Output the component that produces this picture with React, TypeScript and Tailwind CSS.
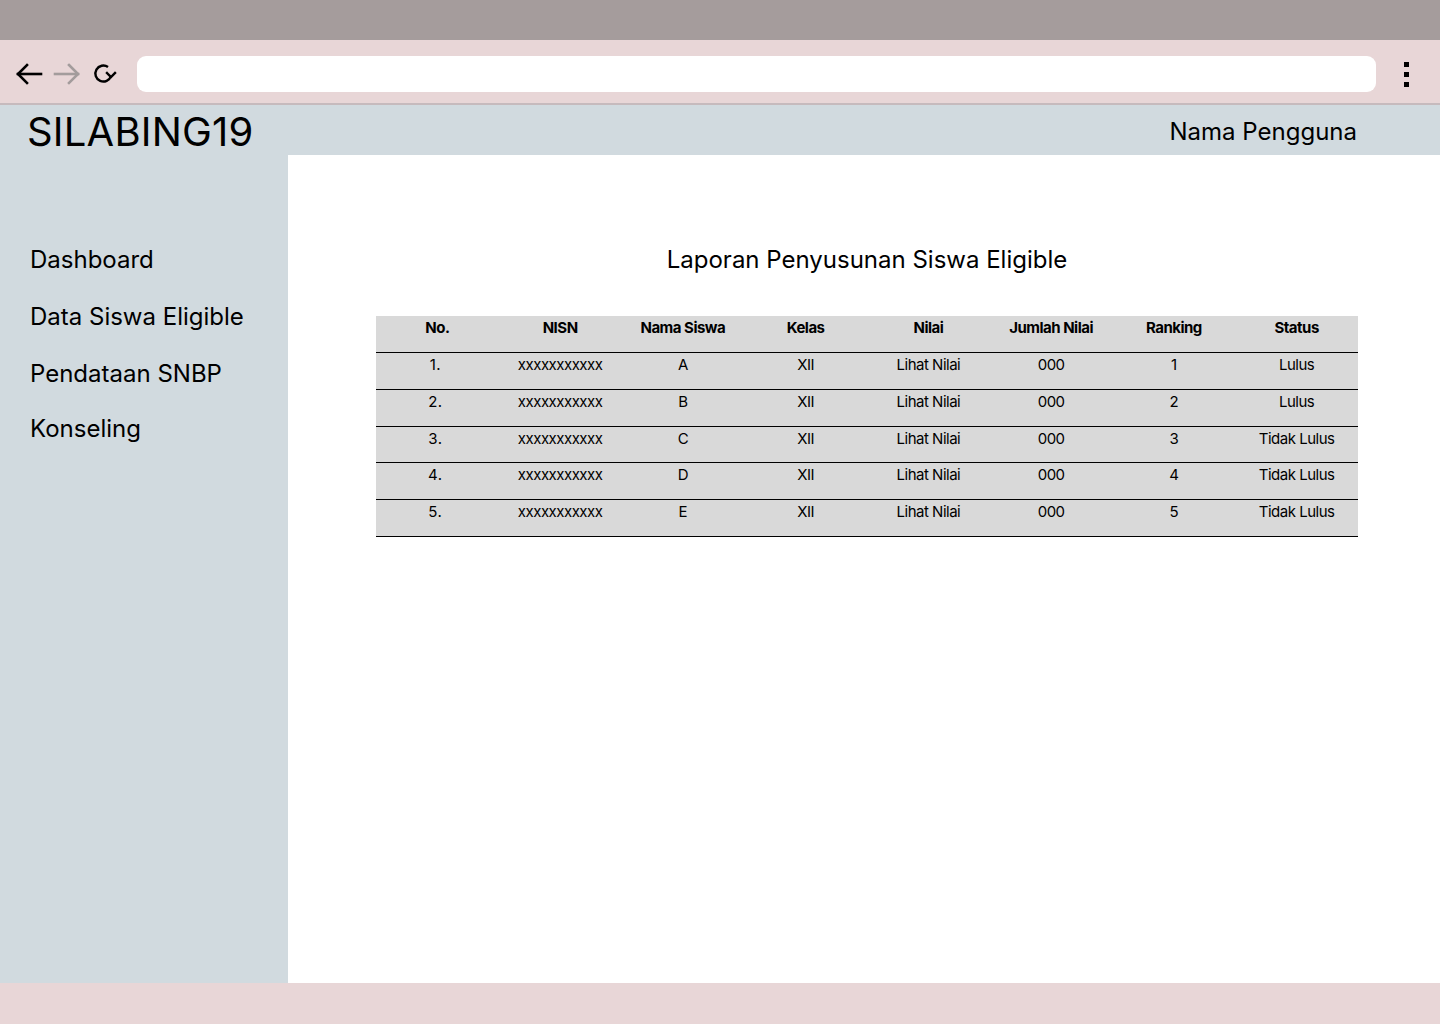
const NAV = ["Dashboard", "Data Siswa Eligible", "Pendataan SNBP", "Konseling"];

const COLUMNS = ["No.", "NISN", "Nama Siswa", "Kelas", "Nilai", "Jumlah Nilai", "Ranking", "Status"];

const ROWS = [
  ["1.", "xxxxxxxxxxx", "A", "XII", "Lihat Nilai", "000", "1", "Lulus"],
  ["2.", "xxxxxxxxxxx", "B", "XII", "Lihat Nilai", "000", "2", "Lulus"],
  ["3.", "xxxxxxxxxxx", "C", "XII", "Lihat Nilai", "000", "3", "Tidak Lulus"],
  ["4.", "xxxxxxxxxxx", "D", "XII", "Lihat Nilai", "000", "4", "Tidak Lulus"],
  ["5.", "xxxxxxxxxxx", "E", "XII", "Lihat Nilai", "000", "5", "Tidak Lulus"],
];

function BrowserBar() {
  return (
    <div className="h-[65px] bg-[#e8d6d7] flex items-start pt-[16px] border-b-2 border-[#c6babd]">
      <div className="flex items-center gap-[10px] pl-[15px] w-[137px] h-[36px]">
        {/* back */}
        <svg width="28" height="24" viewBox="0 0 28 24" fill="none" stroke="#000" strokeWidth="2.6" strokeLinecap="square">
          <path d="M3 12h23" />
          <path d="M12 3l-9 9 9 9" />
        </svg>
        {/* forward */}
        <svg width="28" height="24" viewBox="0 0 28 24" fill="none" stroke="#a39c9c" strokeWidth="2.6" strokeLinecap="square">
          <path d="M2 12h23" />
          <path d="M16 3l9 9-9 9" />
        </svg>
        {/* reload */}
        <svg width="26" height="24" viewBox="0 0 26 24" fill="none" stroke="#000" strokeWidth="2.4" className="ml-[1px]">
          <path d="M19 14a8 8 0 1 1-3-9" />
          <path d="M15 11l4 4 4-4" strokeLinecap="square" />
        </svg>
      </div>
      <div className="w-[1239px] h-[36px] bg-white rounded-[9px]" />
      <div className="flex-1 h-[36px] flex flex-col items-center justify-center gap-[5px] pr-[4px]">
        <div className="w-[5px] h-[5px] bg-black" />
        <div className="w-[5px] h-[5px] bg-black" />
        <div className="w-[5px] h-[5px] bg-black" />
      </div>
    </div>
  );
}

export default function App() {
  return (
    <div className="w-[1440px] h-[1024px] flex flex-col overflow-hidden text-black" style={{ fontFamily: "Inter, 'Noto Sans', sans-serif" }}>
      <div className="h-[40px] bg-[#a59c9c]" />
      <BrowserBar />

      <div className="h-[878px] flex">
        <aside className="w-[288px] bg-[#d1dadf] flex flex-col">
          <div className="pl-[27px] pt-[2px] text-[40px] leading-[50px] tracking-[0.2px]">SILABING19</div>
          <nav className="flex flex-col pl-[30px] pt-[87px] gap-[25px] text-[24px] leading-[32px]">
            {NAV.map((n, i) => (
              <div key={n} className={i === 3 ? "-mt-[2px]" : ""}>{n}</div>
            ))}
          </nav>
        </aside>

        <main className="flex-1 flex flex-col bg-white">
          <header className="h-[50px] bg-[#d1dadf] flex items-center justify-end pt-[4px] pr-[83px] text-[24px] leading-[32px]">
            Nama Pengguna
          </header>
          <div className="ml-[88px] mr-[82px] pt-[89px]">
            <h1 className="text-center text-[24px] leading-[32px]">Laporan Penyusunan Siswa Eligible</h1>
            <table className="w-full mt-[40px] bg-[#d9d9d9] table-fixed border-collapse text-[15px] leading-[18px] tracking-[-0.5px]">
              <thead>
                <tr className="h-[36px] border-b border-black">
                  {COLUMNS.map((c) => (
                    <th key={c} className="font-bold align-top pt-[3px]">{c}</th>
                  ))}
                </tr>
              </thead>
              <tbody>
                {ROWS.map((r, ri) => (
                  <tr key={r[0]} className={`${ri === 2 ? "h-[36px]" : "h-[37px]"} border-b border-black`}>
                    {r.map((v, i) => (
                      <td key={i} className={`text-center align-top pt-[3px] ${i === 0 ? "tracking-[0.5px] pr-[4px]" : ""}`}>{v}</td>
                    ))}
                  </tr>
                ))}
              </tbody>
            </table>
          </div>
        </main>
      </div>

      <div className="flex-1 bg-[#e8d6d7]" />
    </div>
  );
}
